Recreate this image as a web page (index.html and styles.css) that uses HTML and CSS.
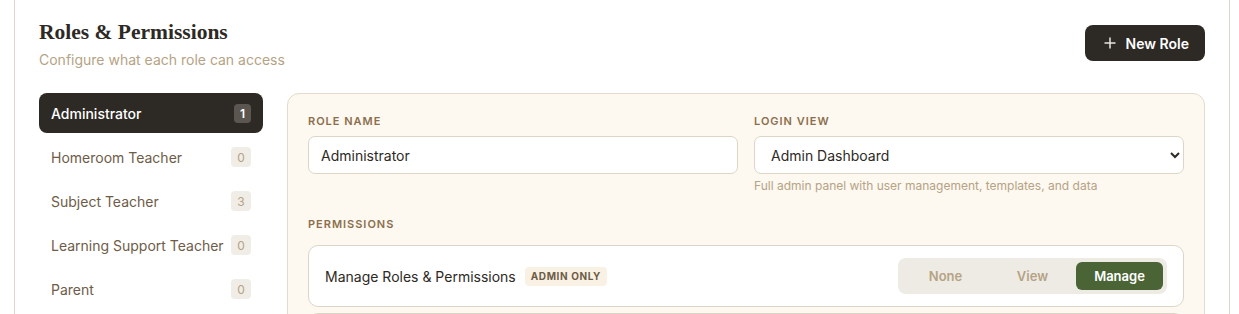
FILE: index.html
```html
<!DOCTYPE html>
<html lang="en">
<head>
<meta charset="utf-8">
<title>Roles &amp; Permissions</title>
<link rel="stylesheet" href="styles.css">
</head>
<body>
<div class="card">
  <header class="header">
    <div class="heading">
      <h1 class="title">Roles &amp; Permissions</h1>
      <p class="subtitle">Configure what each role can access</p>
    </div>
    <button class="btn-primary" type="button">
      <svg class="plus" width="12" height="12" viewBox="0 0 12 12" aria-hidden="true"><path d="M6 0.5V11.5M0.5 6H11.5" stroke="currentColor" stroke-width="1.5" fill="none"/></svg>
      <span>New Role</span>
    </button>
  </header>

  <div class="layout">
    <nav class="roles">
      <a class="role active"><span>Administrator</span><span class="count">1</span></a>
      <a class="role"><span>Homeroom Teacher</span><span class="count">0</span></a>
      <a class="role"><span>Subject Teacher</span><span class="count">3</span></a>
      <a class="role"><span>Learning Support Teacher</span><span class="count">0</span></a>
      <a class="role"><span>Parent</span><span class="count">0</span></a>
    </nav>

    <section class="panel">
      <div class="fields">
        <div class="field">
          <label class="label">Role Name</label>
          <input class="input" type="text" value="Administrator">
        </div>
        <div class="field">
          <label class="label">Login View</label>
          <select class="input select">
            <option>Admin Dashboard</option>
          </select>
          <p class="hint">Full admin panel with user management, templates, and data</p>
        </div>
      </div>

      <div class="label perm-label">Permissions</div>
      <div class="perm-list">
        <div class="perm">
          <div class="perm-name">Manage Roles &amp; Permissions <span class="tag">Admin only</span></div>
          <div class="seg">
            <button class="seg-btn" type="button">None</button>
            <button class="seg-btn" type="button">View</button>
            <button class="seg-btn on" type="button">Manage</button>
          </div>
        </div>
        <div class="perm perm-next"></div>
      </div>
    </section>
  </div>
</div>
</body>
</html>
```
FILE: styles.css
```css
* { box-sizing: border-box; }
html, body { margin: 0; padding: 0; background: #ffffff; }
body {
  font-family: Inter, "Noto Sans", sans-serif;
  color: #2d2925;
  overflow: hidden;
}
.card {
  margin: 0 9px 0 14px;
  border-left: 1px solid #dcd6cc;
  border-right: 1px solid #dcd6cc;
  padding: 17px 24px 40px 24px;
  min-height: 400px;
}
.header {
  display: flex;
  align-items: center;
  justify-content: space-between;
}
.title {
  margin: 0;
  font-family: "Liberation Serif", "DejaVu Serif", serif;
  font-weight: 700;
  font-size: 21.5px;
  line-height: 30px;
  color: #2d2925;
}
.subtitle {
  margin: 4px 0 0;
  font-size: 14px;
  line-height: 18px;
  color: #b5a385;
}
.btn-primary {
  display: flex;
  align-items: center;
  gap: 10px;
  height: 36px;
  padding: 0 16px 0 19px;
  border: none;
  border-radius: 8px;
  background: #2d2925;
  color: #ffffff;
  font-family: Inter, sans-serif;
  font-weight: 600;
  font-size: 14px;
}
.plus { color: #e8e4de; }
.layout {
  display: flex;
  gap: 24px;
  margin-top: 24px;
  align-items: flex-start;
}
.roles {
  width: 224px;
  flex: none;
  display: flex;
  flex-direction: column;
  gap: 4px;
}
.role {
  display: flex;
  align-items: center;
  justify-content: space-between;
  height: 40px;
  padding: 0 12px;
  border-radius: 8px;
  font-size: 14px;
  color: #6e5c48;
}
.role.active {
  background: #2d2925;
  color: #ffffff;
  font-weight: 500;
}
.count {
  min-width: 20px;
  height: 20px;
  padding: 0 5px;
  border-radius: 4px;
  background: #f0ede7;
  color: #b5a385;
  font-size: 12px;
  display: flex;
  align-items: center;
  justify-content: center;
}
.role.active .count {
  min-width: 17px;
  height: 19px;
  padding: 0 4px;
  background: #5b5650;
  color: #ffffff;
  font-weight: 600;
}
.panel {
  flex: 1;
  background: #fdf8f0;
  border: 1px solid #e3dccd;
  border-radius: 12px;
  padding: 20px 20px 20px;
  min-height: 260px;
}
.fields {
  display: grid;
  grid-template-columns: 1fr 1fr;
  gap: 16px;
}
.field { display: flex; flex-direction: column; }
.label {
  display: block;
  font-size: 11px;
  line-height: 14px;
  font-weight: 600;
  letter-spacing: 0.09em;
  text-transform: uppercase;
  color: #8b6f4d;
  margin-bottom: 8px;
}
.input {
  height: 38px;
  border: 1px solid #ddd6c8;
  border-radius: 7px;
  background: #ffffff;
  padding: 0 12px;
  font-family: Inter, sans-serif;
  font-size: 14px;
  color: #2d2925;
  outline: none;
}
.select { padding: 0 10px 0 12px; }
.hint {
  margin: 4px 0 0;
  font-size: 12px;
  line-height: 15px;
  color: #b5a385;
}
.perm-label { margin-top: 24px; margin-bottom: 14px; }
.perm-list { display: flex; flex-direction: column; gap: 6px; }
.perm {
  display: flex;
  align-items: center;
  justify-content: space-between;
  background: #ffffff;
  border: 1px solid #ddd6c8;
  border-radius: 10px;
  padding: 12px 16px;
}
.perm-next { height: 62px; }
.perm-name {
  font-size: 14px;
  color: #2d2925;
  display: flex;
  align-items: center;
  gap: 9px;
}
.tag {
  background: #f9f1e3;
  color: #6e5c48;
  font-size: 10px;
  font-weight: 700;
  letter-spacing: 0.06em;
  text-transform: uppercase;
  border-radius: 4px;
  padding: 3px 6px;
  line-height: 13px;
}
.seg {
  display: flex;
  gap: 0;
  background: #eeebe5;
  border-radius: 8px;
  padding: 4px;
}
.seg-btn {
  width: 87px;
  height: 28px;
  border: none;
  background: transparent;
  border-radius: 6px;
  font-family: Inter, sans-serif;
  font-size: 13px;
  font-weight: 600;
  color: #b5a385;
}
.seg-btn.on {
  background: #4a6435;
  color: #ffffff;
}
```
